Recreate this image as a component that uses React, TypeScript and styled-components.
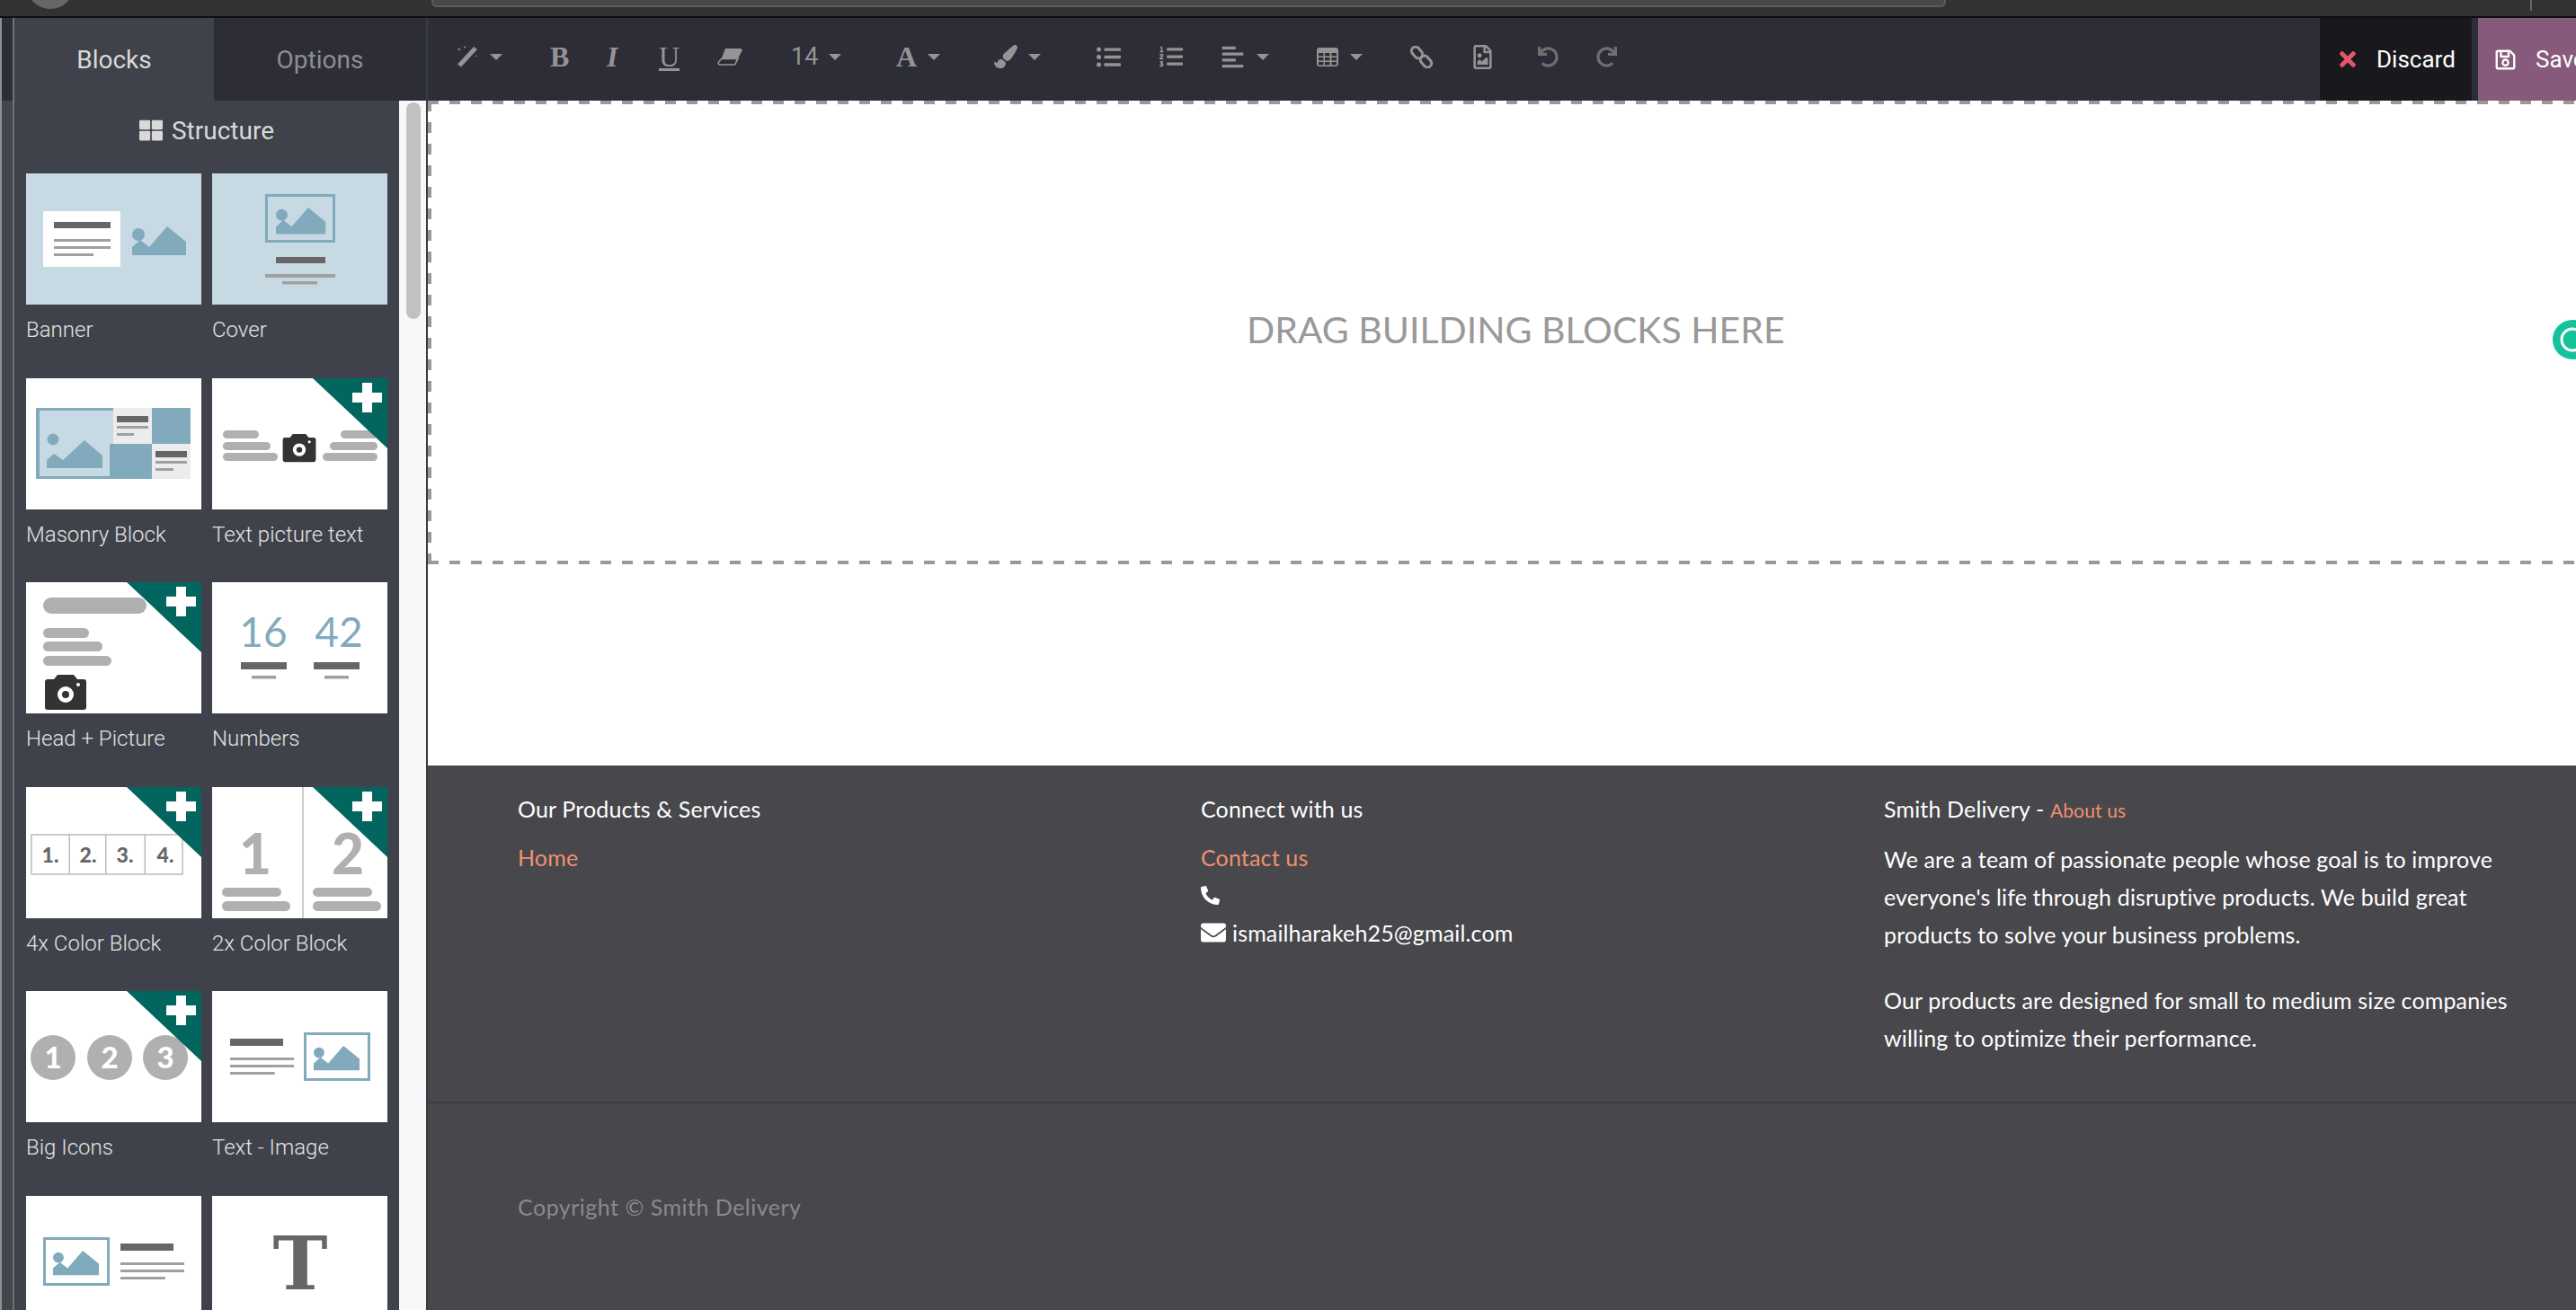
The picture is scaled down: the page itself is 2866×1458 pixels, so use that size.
import { ReactNode } from 'react'
import styled, { createGlobalStyle } from 'styled-components'
import {
  FaAlignLeft,
  FaEnvelope,
  FaListOl,
  FaListUl,
  FaPaintBrush,
  FaPhoneAlt,
  FaRedo,
  FaRegFileImage,
  FaRegSave,
  FaThLarge,
  FaTimes,
  FaUndo,
} from 'react-icons/fa'

const BLUE = '#82aabd'
const DARK = '#666666'
const LINE = '#a0a0a0'
const PILL = '#b0b0b0'
const TEAL = '#02665e'
const TOOL = '#949494'
const BAR = '#2d2d37'

const Mountain = ({ x, y, s = 1 }: { x: number; y: number; s?: number }) => (
  <g transform={`translate(${x} ${y}) scale(${s})`} fill={BLUE}>
    <circle cx="7" cy="9" r="7" />
    <path d="M0 32V23L9 15L19 23L39 0L60 17V32Z" />
  </g>
)

const Frame = ({ x, y, w, h }: { x: number; y: number; w: number; h: number }) => (
  <rect x={x + 1.5} y={y + 1.5} width={w - 3} height={h - 3} fill="none" stroke={BLUE} strokeWidth="3" />
)

const TextLines = ({ x, y, w }: { x: number; y: number; w: number }) => (
  <g fill={LINE}>
    <rect x={x} y={y} width={w} height="3" />
    <rect x={x} y={y + 8} width={w} height="3" />
    <rect x={x} y={y + 16} width={w * 0.7} height="3" />
  </g>
)

const Pill = ({ x, y, w, h }: { x: number; y: number; w: number; h: number }) => (
  <rect x={x} y={y} width={w} height={h} rx={h / 2} fill={PILL} />
)

const Camera = ({ cx, cy, s = 1 }: { cx: number; cy: number; s?: number }) => (
  <g transform={`translate(${cx} ${cy}) scale(${s})`}>
    <path d="M-23 -12a3 3 0 0 1 3-3h7l4-5h18l4 5h7a3 3 0 0 1 3 3v28a3 3 0 0 1-3 3h-40a3 3 0 0 1-3-3z" fill="#333333" />
    <circle cx="0" cy="2" r="9" fill="#ffffff" />
    <circle cx="0" cy="2" r="4" fill="#333333" />
    <circle cx="14" cy="-9" r="2" fill="#ffffff" />
  </g>
)

const Corner = () => (
  <g>
    <path d="M112 0H195V78Z" fill={TEAL} />
    <rect x="156" y="16" width="33" height="11" fill="#ffffff" />
    <rect x="167" y="5" width="11" height="33" fill="#ffffff" />
  </g>
)

function Digit({
  x,
  y,
  size,
  weight,
  color,
  family = "'Lato', sans-serif",
  children,
}: {
  x: number
  y: number
  size: number
  weight: number
  color: string
  family?: string
  children: ReactNode
}) {
  return (
    <text x={x} y={y} fontSize={size} fontWeight={weight} fill={color} fontFamily={family} textAnchor="middle">
      {children}
    </text>
  )
}

const WandIcon = () => (
  <svg width="24" height="24" viewBox="0 0 24 24" fill={TOOL}>
    <path d="M19 1L23 4L5 23.500L1 20.500Z" />
    <path d="M3 2l.6 1.400L5 4l-1.400.6L3 6l-.6-1.400L1 4l1.400-.6z" />
    <path d="M9 0l.5 1.100 1.100.5-1.100.5L9 3.200l-.5-1.100L7.400 1.600l1.100-.5z" />
    <path d="M22 10l.4 1 1 .4-1 .4-.4 1-.4-1-1-.4 1-.4z" />
  </svg>
)

const EraserIcon = () => (
  <svg width="28" height="19" viewBox="0 0 28 19">
    <path d="M9 0H26a2 2 0 0 1 1.500 2.500L23 11.500H4.500Z" fill={TOOL} />
    <path d="M4.500 11.500H23L19.500 18H3a2 2 0 0 1-1.800-2.500Z" fill="none" stroke={TOOL} strokeWidth="1.600" />
  </svg>
)

const TableIcon = () => (
  <svg width="24" height="21" viewBox="0 0 24 21">
    <rect width="24" height="21" rx="3" fill={TOOL} />
    {[6, 11, 16].map((y) =>
      [2, 9, 16.5].map((x) => <rect key={`${x}-${y}`} x={x} y={y} width="5.500" height="3.400" fill={BAR} />),
    )}
  </svg>
)

const LinkIcon = () => (
  <svg width="27" height="25" viewBox="0 0 27 25" fill="none" stroke={TOOL} strokeWidth="3">
    <rect x="1.500" y="3" width="14" height="9" rx="4.500" transform="rotate(50 8.500 7.500)" />
    <rect x="11.500" y="13" width="14" height="9" rx="4.500" transform="rotate(50 18.500 17.500)" />
  </svg>
)

type Block = { label?: string; bg?: string; art: ReactNode }

const blocks: Block[] = [
  {
    label: 'Banner',
    bg: '#c7d9e3',
    art: (
      <>
        <rect x="19" y="42" width="86" height="62" fill="#ffffff" />
        <rect x="31" y="54" width="63" height="7" fill={DARK} />
        <TextLines x={31} y={73} w={63} />
        <Mountain x={118} y={59} />
      </>
    ),
  },
  {
    label: 'Cover',
    bg: '#c7d9e3',
    art: (
      <>
        <Frame x={59} y={23} w={78} h={54} />
        <Mountain x={71} y={38} s={0.92} />
        <rect x="71" y="93" width="55" height="7" fill={DARK} />
        <rect x="59" y="112" width="78" height="4" fill={LINE} />
        <rect x="78" y="120" width="39" height="3.5" fill={LINE} />
      </>
    ),
  },
  {
    label: 'Masonry Block',
    art: (
      <>
        <rect x="11" y="33" width="86" height="79" fill="#c7d9e3" />
        <rect x="11" y="33" width="86" height="3" fill={BLUE} />
        <rect x="11" y="33" width="4" height="79" fill={BLUE} />
        <rect x="11" y="109" width="86" height="3" fill={BLUE} />
        <rect x="93" y="73" width="47" height="39" fill={BLUE} />
        <rect x="140" y="33" width="43" height="40" fill={BLUE} />
        <rect x="97" y="33" width="43" height="40" fill="#ececec" />
        <rect x="140" y="73" width="43" height="39" fill="#ececec" />
        <rect x="101" y="42" width="35" height="7" fill={DARK} />
        <rect x="101" y="53" width="35" height="3" fill={LINE} />
        <rect x="101" y="61" width="19" height="3" fill={LINE} />
        <rect x="144" y="81" width="35" height="7" fill={DARK} />
        <rect x="144" y="92" width="35" height="3" fill={LINE} />
        <rect x="144" y="100" width="20" height="3" fill={LINE} />
        <circle cx="30" cy="68" r="6.5" fill={BLUE} />
        <path d="M23 100V91L31 84L41 91L65 69L85 86V100Z" fill={BLUE} />
      </>
    ),
  },
  {
    label: 'Text picture text',
    art: (
      <>
        <Pill x={12} y={58} w={40} h={9} />
        <Pill x={12} y={71} w={53} h={9} />
        <Pill x={12} y={83} w={61} h={9} />
        <Pill x={143} y={58} w={41} h={9} />
        <Pill x={131} y={71} w={53} h={9} />
        <Pill x={123} y={83} w={61} h={9} />
        <Camera cx={97} cy={78} s={0.8} />
        <Corner />
      </>
    ),
  },
  {
    label: 'Head + Picture',
    art: (
      <>
        <Pill x={19} y={17} w={115} h={18} />
        <Pill x={19} y={51} w={51} h={11} />
        <Pill x={19} y={66} w={66} h={11} />
        <Pill x={19} y={82} w={76} h={11} />
        <Camera cx={44} cy={123} s={1} />
        <Corner />
      </>
    ),
  },
  {
    label: 'Numbers',
    art: (
      <>
        <Digit x={57} y={72} size={46} weight={400} color={BLUE}>16</Digit>
        <Digit x={141} y={72} size={46} weight={400} color={BLUE}>42</Digit>
        <rect x="32" y="89" width="51" height="8" fill={DARK} />
        <rect x="113" y="89" width="51" height="8" fill={DARK} />
        <rect x="44" y="104" width="27" height="3.5" fill={LINE} />
        <rect x="125" y="104" width="27" height="3.5" fill={LINE} />
      </>
    ),
  },
  {
    label: '4x Color Block',
    art: (
      <>
        <rect x="6" y="53" width="168" height="44" fill="none" stroke="#bbbbbb" strokeWidth="1.5" />
        <rect x="47.5" y="53" width="1.5" height="44" fill="#bbbbbb" />
        <rect x="88" y="53" width="1.5" height="44" fill="#bbbbbb" />
        <rect x="131.5" y="53" width="1.5" height="44" fill="#bbbbbb" />
        <Digit x={27} y={84} size={23} weight={900} color={DARK}>1.</Digit>
        <Digit x={69} y={84} size={23} weight={900} color={DARK}>2.</Digit>
        <Digit x={110} y={84} size={23} weight={900} color={DARK}>3.</Digit>
        <Digit x={155} y={84} size={23} weight={900} color={DARK}>4.</Digit>
        <Corner />
      </>
    ),
  },
  {
    label: '2x Color Block',
    art: (
      <>
        <rect x="100" y="0" width="2" height="146" fill="#cccccc" />
        <Digit x={48} y={97} size={62} weight={900} color={PILL}>1</Digit>
        <Digit x={151} y={97} size={62} weight={900} color={PILL}>2</Digit>
        <Pill x={11} y={112} w={66} h={10} />
        <Pill x={11} y={127} w={76} h={11} />
        <Pill x={112} y={112} w={66} h={10} />
        <Pill x={112} y={127} w={76} h={11} />
        <Corner />
      </>
    ),
  },
  {
    label: 'Big Icons',
    art: (
      <>
        <circle cx="30" cy="74" r="25" fill={PILL} />
        <circle cx="93" cy="74" r="25" fill={PILL} />
        <circle cx="155" cy="74" r="25" fill={PILL} />
        <Digit x={30} y={86} size={33} weight={900} color="#ffffff">1</Digit>
        <Digit x={93} y={86} size={33} weight={900} color="#ffffff">2</Digit>
        <Digit x={155} y={86} size={33} weight={900} color="#ffffff">3</Digit>
        <Corner />
      </>
    ),
  },
  {
    label: 'Text - Image',
    art: (
      <>
        <rect x="20" y="53" width="59" height="8" fill={DARK} />
        <TextLines x={20} y={74} w={71} />
        <Frame x={102} y={46} w={74} h={54} />
        <Mountain x={113} y={61} s={0.85} />
      </>
    ),
  },
  {
    art: (
      <>
        <Frame x={19} y={46} w={74} h={54} />
        <Mountain x={30} y={61} s={0.85} />
        <rect x="105" y="53" width="59" height="8" fill={DARK} />
        <TextLines x={105} y={74} w={71} />
      </>
    ),
  },
  {
    art: (
      <Digit x={98} y={104} size={82} weight={700} color={DARK} family="'DejaVu Serif', serif">
        T
      </Digit>
    ),
  },
]

const GlobalStyle = createGlobalStyle`
  html, body {
    margin: 0;
    padding: 0;
    background: #ffffff;
    overflow: hidden;
  }
`

const Page = styled.div`
  width: 2866px;
  height: 1458px;
  display: flex;
  flex-direction: column;
  overflow: hidden;
  font-family: 'Roboto', sans-serif;
`

const TopStrip = styled.div`
  height: 18px;
  flex: none;
  display: flex;
  align-items: flex-start;
  background: #323232;
  border-bottom: 2px solid #0e0e0e;
  overflow: hidden;
`

const Avatar = styled.div`
  width: 52px;
  height: 52px;
  margin: -42px 0 0 30px;
  flex: none;
  border-radius: 50%;
  background: #666666;
`

const AddressBar = styled.div`
  width: 1685px;
  height: 8px;
  margin-left: 398px;
  flex: none;
  box-sizing: border-box;
  background: #484848;
  border: 2px solid #5c5c5c;
  border-top: none;
  border-radius: 0 0 6px 6px;
`

const TopDivider = styled.div`
  width: 2px;
  height: 12px;
  margin-left: 650px;
  flex: none;
  background: #666666;
`

const Body = styled.div`
  flex: 1;
  min-height: 0;
  display: flex;
`

const Edge = styled.div`
  width: 16px;
  flex: none;
  box-sizing: border-box;
  border-left: 2px solid #8f8f8f;
  border-right: 2px solid #6e7175;
  background: linear-gradient(#2d2f38 0 92px, #44464e 92px);
`

const Sidebar = styled.aside`
  width: 460px;
  flex: none;
  box-sizing: border-box;
  display: flex;
  flex-direction: column;
  border-right: 2px solid #3a3c44;
`

const Tabs = styled.div`
  height: 92px;
  flex: none;
  display: flex;
`

const Tab = styled.div<{ $active?: boolean }>`
  width: ${(p) => (p.$active ? '222px' : '236px')};
  display: flex;
  align-items: center;
  justify-content: center;
  font-size: 28px;
  background: ${(p) => (p.$active ? '#3f424a' : BAR)};
  color: ${(p) => (p.$active ? '#d9d9d9' : '#8e8e8e')};
`

const SidebarBody = styled.div`
  flex: 1;
  min-height: 0;
  display: flex;
`

const Panel = styled.div`
  width: 428px;
  flex: none;
  background: #3f424a;
  overflow: hidden;
`

const Heading = styled.div`
  height: 66px;
  margin-bottom: 15px;
  display: flex;
  align-items: center;
  justify-content: center;
  gap: 10px;
  font-size: 28px;
  color: #d9d9d9;
`

const BlockGrid = styled.div`
  display: grid;
  grid-template-columns: 195px 195px;
  column-gap: 12px;
  padding-left: 13px;
`

const BlockItem = styled.div`
  height: 227.6px;
`

const Thumb = styled.svg<{ $bg?: string }>`
  display: block;
  width: 195px;
  height: 146px;
  background: ${(p) => p.$bg || '#ffffff'};
`

const BlockLabel = styled.div`
  margin-top: 14px;
  font-size: 24px;
  line-height: 28px;
  font-weight: 300;
  color: #e2e2e2;
`

const ScrollTrack = styled.div`
  flex: 1;
  background: #f8f8f8;
  padding: 2px 6px 0 8px;
`

const ScrollThumb = styled.div`
  height: 241px;
  border-radius: 8px;
  background: #c1c1c1;
`

const Main = styled.main`
  flex: 1;
  min-width: 0;
  display: flex;
  flex-direction: column;
`

const Toolbar = styled.div`
  height: 92px;
  flex: none;
  display: flex;
  align-items: stretch;
  padding-left: 32px;
  background: ${BAR};
  color: ${TOOL};
`

const ToolButton = styled.div<{ $w: number; $gap?: number }>`
  width: ${(p) => p.$w}px;
  flex: none;
  box-sizing: border-box;
  padding-bottom: 6px;
  display: flex;
  align-items: center;
  gap: ${(p) => p.$gap || 0}px;
`

const SerifGlyph = styled.span<{ $weight?: number; $italic?: boolean; $underline?: boolean }>`
  font-family: 'Liberation Serif', serif;
  font-size: 32px;
  font-weight: ${(p) => p.$weight || 400};
  font-style: ${(p) => (p.$italic ? 'italic' : 'normal')};
  text-decoration: ${(p) => (p.$underline ? 'underline' : 'none')};
`

const SizeGlyph = styled.span`
  font-size: 27px;
`

const DimIcon = styled.span`
  display: flex;
  color: #6f6f6f;
`

const Caret = styled.span`
  width: 0;
  height: 0;
  border-left: 7px solid transparent;
  border-right: 7px solid transparent;
  border-top: 7px solid ${TOOL};
`

const DiscardButton = styled.div`
  width: 169px;
  margin-left: auto;
  flex: none;
  box-sizing: border-box;
  padding-left: 18px;
  display: flex;
  align-items: center;
  gap: 19px;
  background: #19191d;
  color: #ffffff;
  font-size: 26px;

  svg {
    flex: none;
  }
`

const SaveButton = styled.div`
  width: 109px;
  margin-left: 7px;
  flex: none;
  box-sizing: border-box;
  padding-left: 18px;
  display: flex;
  align-items: center;
  gap: 21px;
  background: #875a7b;
  color: #ffffff;
  font-size: 26px;
  white-space: nowrap;

  svg {
    flex: none;
  }
`

const Canvas = styled.div`
  flex: 1;
  min-height: 0;
  position: relative;
  display: flex;
  flex-direction: column;
  overflow: hidden;
  background: #ffffff;
`

const DropZone = styled.div`
  width: calc(100% + 20px);
  height: 516px;
  flex: none;
  box-sizing: border-box;
  background:
    repeating-linear-gradient(90deg, #999999 0 12px, transparent 12px 24px) top left / 100% 4px no-repeat,
    repeating-linear-gradient(90deg, #999999 0 12px, transparent 12px 24px) bottom left / 100% 4px no-repeat,
    repeating-linear-gradient(180deg, #999999 0 12px, transparent 12px 24px) top left / 4px 100% no-repeat;
  display: flex;
  align-items: center;
  padding: 0 0 8px 911px;
  font-family: 'Lato', sans-serif;
  font-size: 41px;
  font-weight: 400;
  color: #999999;
`

const Spacer = styled.div`
  height: 224px;
  flex: none;
`

const Badge = styled.div`
  position: absolute;
  top: 244px;
  right: -18px;
  width: 44px;
  height: 44px;
  border-radius: 50%;
  background: #15c39a;
  display: flex;
`

const Footer = styled.footer`
  flex: 1;
  background: #47474c;
  font-family: 'Lato', sans-serif;
  font-size: 25px;
  line-height: 42px;
  letter-spacing: 0.15px;
  color: #ffffff;
`

const FooterCols = styled.div`
  display: grid;
  grid-template-columns: 760px 760px 1fr;
  padding: 27px 0 0 100px;
  height: 376px;
  box-sizing: border-box;
  border-bottom: 2px solid #3a3d44;
`

const FooterCol = styled.div`
  white-space: nowrap;
`

const FooterTitle = styled.div`
  margin-bottom: 12px;
`

const FooterLink = styled.div`
  color: #f0906f;
`

const SmallLink = styled.span`
  font-size: 21px;
  color: #f0906f;
`

const FooterRow = styled.div`
  height: 42px;
  display: flex;
  align-items: center;
  gap: 7px;
`

const FooterText = styled.p`
  margin: 0 0 31px;
`

const Copyright = styled.div`
  padding: 94px 0 0 100px;
  letter-spacing: 0.5px;
  color: #8a8a8e;
`

type Tool = { w: number; icon: ReactNode; caret?: boolean; gap?: number }

const tools: Tool[] = [
  { w: 104, icon: <WandIcon />, caret: true, gap: 13 },
  { w: 63, icon: <SerifGlyph $weight={700}>B</SerifGlyph> },
  { w: 58, icon: <SerifGlyph $weight={700} $italic>I</SerifGlyph> },
  { w: 65, icon: <SerifGlyph $underline>U</SerifGlyph> },
  { w: 82, icon: <EraserIcon /> },
  { w: 117, icon: <SizeGlyph>14</SizeGlyph>, caret: true, gap: 12 },
  { w: 109, icon: <SerifGlyph $weight={700}>A</SerifGlyph>, caret: true, gap: 12 },
  { w: 114, icon: <FaPaintBrush size={26} />, caret: true, gap: 12 },
  { w: 70, icon: <FaListUl size={27} /> },
  { w: 68, icon: <FaListOl size={26} /> },
  { w: 107, icon: <FaAlignLeft size={27} />, caret: true, gap: 13 },
  { w: 103, icon: <TableIcon />, caret: true, gap: 13 },
  { w: 68, icon: <LinkIcon /> },
  { w: 75, icon: <FaRegFileImage size={27} /> },
  { w: 65, icon: <DimIcon><FaUndo size={23} /></DimIcon> },
  { w: 60, icon: <DimIcon><FaRedo size={23} /></DimIcon> },
]

export default function App() {
  return (
    <>
      <GlobalStyle />
      <Page>
        <TopStrip>
          <Avatar />
          <AddressBar />
          <TopDivider />
        </TopStrip>
        <Body>
          <Edge />
          <Sidebar>
            <Tabs>
              <Tab $active>Blocks</Tab>
              <Tab>Options</Tab>
            </Tabs>
            <SidebarBody>
              <Panel>
                <Heading>
                  <FaThLarge size={26} />
                  Structure
                </Heading>
                <BlockGrid>
                  {blocks.map((b, i) => (
                    <BlockItem key={i}>
                      <Thumb $bg={b.bg} viewBox="0 0 195 146">
                        {b.art}
                      </Thumb>
                      {b.label && <BlockLabel>{b.label}</BlockLabel>}
                    </BlockItem>
                  ))}
                </BlockGrid>
              </Panel>
              <ScrollTrack>
                <ScrollThumb />
              </ScrollTrack>
            </SidebarBody>
          </Sidebar>
          <Main>
            <Toolbar>
              {tools.map((t, i) => (
                <ToolButton key={i} $w={t.w} $gap={t.gap}>
                  {t.icon}
                  {t.caret && <Caret />}
                </ToolButton>
              ))}
              <DiscardButton>
                <FaTimes size={26} color="#e4566b" />
                Discard
              </DiscardButton>
              <SaveButton>
                <FaRegSave size={25} />
                Save
              </SaveButton>
            </Toolbar>
            <Canvas>
              <DropZone>DRAG BUILDING BLOCKS HERE</DropZone>
              <Spacer />
              <Badge>
                <svg width="44" height="44" viewBox="0 0 44 44" fill="none" stroke="#ffffff" strokeWidth="3">
                  <circle cx="22" cy="22" r="12" />
                </svg>
              </Badge>
              <Footer>
                <FooterCols>
                  <FooterCol>
                    <FooterTitle>Our Products &amp; Services</FooterTitle>
                    <FooterLink>Home</FooterLink>
                  </FooterCol>
                  <FooterCol>
                    <FooterTitle>Connect with us</FooterTitle>
                    <FooterLink>Contact us</FooterLink>
                    <FooterRow>
                      <FaPhoneAlt size={21} />
                    </FooterRow>
                    <FooterRow>
                      <FaEnvelope size={28} />
                      ismailharakeh25@gmail.com
                    </FooterRow>
                  </FooterCol>
                  <FooterCol>
                    <FooterTitle>
                      Smith Delivery - <SmallLink>About us</SmallLink>
                    </FooterTitle>
                    <FooterText>
                      We are a team of passionate people whose goal is to improve
                      <br />
                      everyone's life through disruptive products. We build great
                      <br />
                      products to solve your business problems.
                    </FooterText>
                    <FooterText>
                      Our products are designed for small to medium size companies
                      <br />
                      willing to optimize their performance.
                    </FooterText>
                  </FooterCol>
                </FooterCols>
                <Copyright>Copyright © Smith Delivery</Copyright>
              </Footer>
            </Canvas>
          </Main>
        </Body>
      </Page>
    </>
  )
}
